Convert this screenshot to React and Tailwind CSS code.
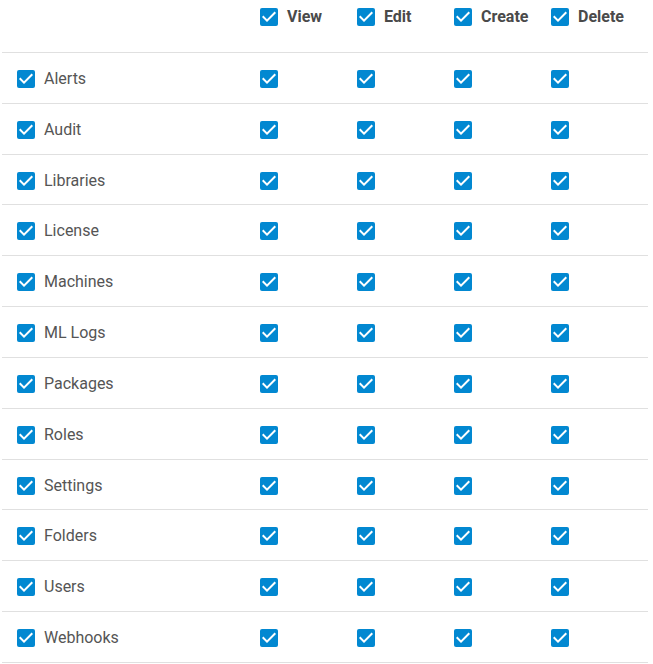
import React from "react";

function Box() {
  return (
    <span className="inline-flex h-[18px] w-[18px] shrink-0 items-center justify-center rounded-[2px] bg-[#0288d1]">
      <svg viewBox="3 3 18 18" width="18" height="18" aria-hidden="true">
        <path d="M10 17l-5-5 1.41-1.41L10 14.17l7.59-7.59L19 8l-9 9z" fill="#fff" />
      </svg>
    </span>
  );
}

const rows = [
  "Alerts",
  "Audit",
  "Libraries",
  "License",
  "Machines",
  "ML Logs",
  "Packages",
  "Roles",
  "Settings",
  "Folders",
  "Users",
  "Webhooks",
];

const cols = ["View", "Edit", "Create", "Delete"];

export default function App() {
  return (
    <div
      className="h-[664px] w-[653px] bg-white"
      style={{ fontFamily: "Roboto, 'Liberation Sans', sans-serif" }}
    >
      <div className="ml-[2px] w-[646px]">
        <div className="flex h-[53px] items-start border-b border-[#e0e0e0] pt-[7px]">
          <div className="w-[258px]" />
          {cols.map((c) => (
            <div key={c} className="flex w-[97px] items-center gap-[9px]">
              <Box />
              <span className="pt-[1px] text-[16px] font-bold leading-[18px] text-[#4a4a4a]">{c}</span>
            </div>
          ))}
        </div>
        {rows.map((r) => (
          <div
            key={r}
            className="flex h-[50.83px] items-center border-b border-[#e0e0e0] pt-[2px]"
          >
            <div className="flex w-[258px] items-center gap-[9px] pl-[15px]">
              <Box />
              <span className="text-[16px] leading-[18px] text-[#555555]">{r}</span>
            </div>
            {cols.map((c) => (
              <div key={c} className="flex w-[97px] items-center">
                <Box />
              </div>
            ))}
          </div>
        ))}
      </div>
    </div>
  );
}
